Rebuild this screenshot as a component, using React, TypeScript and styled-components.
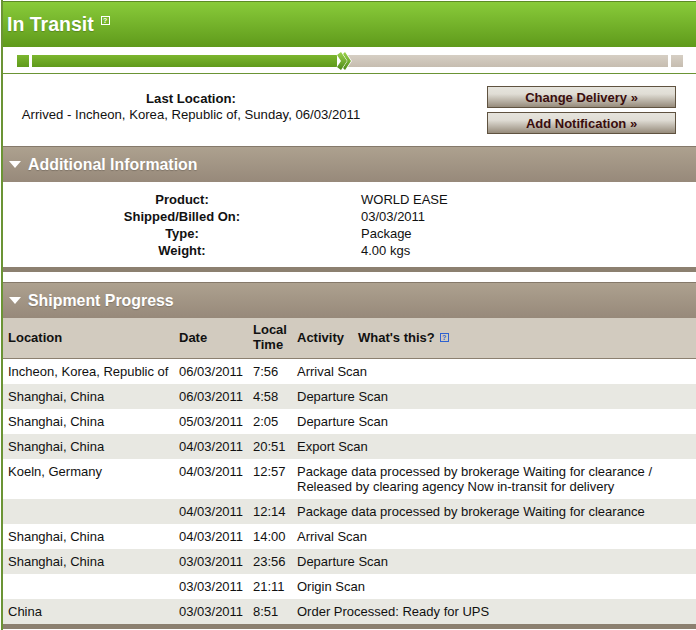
import React from "react";
import styled, { createGlobalStyle } from "styled-components";

const Global = createGlobalStyle`
  html, body { margin: 0; padding: 0; background: #fff; }
  body { font-family: "Liberation Sans", Arial, sans-serif; font-size: 13px; color: #111; }
`;

const Page = styled.div`
  width: 695px;
  height: 630px;
  margin-left: 1px;
  padding-top: 1px;
  box-sizing: border-box;
  overflow: hidden;
  border-left: 2px solid #6b9435;
`;

const StatusBar = styled.div`
  height: 45px;
  border-top: 1px solid #5d8a26;
  background: linear-gradient(#89cb3a, #5f9a1b);
  display: flex;
  align-items: flex-start;
  padding-left: 4px;
`;

const StatusTitle = styled.h1`
  margin: 10px 0 0;
  font-size: 19.5px;
  line-height: 24px;
  font-weight: bold;
  color: #fff;
  text-shadow: 0 1px 1px rgba(0, 0, 0, 0.2);
`;

const HelpBox = styled.span<{ $blue?: boolean }>`
  display: inline-flex;
  align-items: center;
  justify-content: center;
  width: 9px;
  height: 9px;
  box-sizing: border-box;
  border: 1px solid ${(p) => (p.$blue ? "#2f62d0" : "#fff")};
  color: ${(p) => (p.$blue ? "#2f62d0" : "#fff")};
  font-size: 7px;
  line-height: 7px;
  font-weight: bold;
`;

const TitleHelp = styled(HelpBox)`
  margin: 14px 0 0 7px;
`;

const ProgressRow = styled.div`
  height: 27px;
  box-sizing: border-box;
  padding: 8px 0 0 14px;
  border-bottom: 1px solid #6b9435;
  display: flex;
  align-items: flex-start;
`;

const Segment = styled.div<{ $w: number; $done?: boolean }>`
  width: ${(p) => p.$w}px;
  height: 12px;
  margin-right: 3px;
  background: ${(p) =>
    p.$done ? "linear-gradient(#7cb62f, #5f9a1b)" : "linear-gradient(#d6cfc4, #c6bdb0)"};
`;

const Chevron = styled.svg`
  position: relative;
  z-index: 1;
  width: 14px;
  height: 18px;
  margin: -3px -6px 0 -3px;
  flex: none;
  overflow: visible;
`;

const Summary = styled.div`
  height: 72px;
  display: flex;
`;

const LastLocation = styled.div`
  width: 376px;
  padding: 17px 0 0 0;
  text-align: center;
  font-size: 13.15px;
  line-height: 16px;
`;

const Strong = styled.div`
  font-weight: bold;
`;

const Actions = styled.div`
  margin: 12px 0 0 108px;
  display: flex;
  flex-direction: column;
  gap: 4px;
`;

const ActionButton = styled.button`
  width: 189px;
  height: 22px;
  padding: 0;
  border: 1px solid #5f5240;
  background: linear-gradient(#e6e4dd, #e0ddd5 35%, #968b7b);
  color: #3a0d0d;
  font-family: inherit;
  font-size: 13px;
  font-weight: bold;
  text-align: center;
`;

const SectionHeader = styled.div`
  height: 36px;
  box-sizing: border-box;
  border-top: 1px solid #85796a;
  background: linear-gradient(#ada18f, #97897a);
  display: flex;
  align-items: center;
  padding-left: 6px;
  gap: 7px;
  font-size: 15.9px;
  font-weight: bold;
  color: #fff;
  text-shadow: 0 1px 1px rgba(0, 0, 0, 0.2);
`;

const Triangle = styled.span`
  width: 0;
  height: 0;
  border-left: 6.5px solid transparent;
  border-right: 6.5px solid transparent;
  border-top: 7px solid #fff;
`;

const Details = styled.div`
  height: 85px;
  box-sizing: border-box;
  padding-top: 9px;
  display: grid;
  grid-template-columns: 358px 1fr;
  grid-auto-rows: 17px;
  font-size: 13px;
  line-height: 17px;
`;

const DetailLabel = styled.div`
  font-weight: bold;
  text-align: center;
  width: 358px;
`;

const DetailValue = styled.div``;

const Rule = styled.div`
  height: 5px;
  background: #8c8070;
`;

const Spacer = styled.div`
  height: 10px;
`;

const TableGrid = styled.div`
  display: grid;
  grid-template-columns: 171px 74px 44px 1fr;
  padding-left: 5px;
`;

const HeadRow = styled(TableGrid)`
  height: 41px;
  box-sizing: border-box;
  padding-bottom: 2px;
  background: #d2cbbf;
  border-bottom: 1px solid #8c8070;
  align-items: center;
  font-size: 13px;
  line-height: 15px;
  font-weight: bold;
`;

const WhatsThis = styled.span`
  margin-left: 14px;
  display: inline-flex;
  align-items: center;
  gap: 5px;
`;

const Row = styled(TableGrid)<{ $alt?: boolean }>`
  background: ${(p) => (p.$alt ? "#e8e8e2" : "#fff")};
  padding-top: 5px;
  padding-bottom: 5px;
  font-size: 13px;
  line-height: 15px;
`;

const details = [
  ["Product:", "WORLD EASE"],
  ["Shipped/Billed On:", "03/03/2011"],
  ["Type:", "Package"],
  ["Weight:", "4.00 kgs"],
];

const rows = [
  ["Incheon, Korea, Republic of", "06/03/2011", "7:56", "Arrival Scan"],
  ["Shanghai, China", "06/03/2011", "4:58", "Departure Scan"],
  ["Shanghai, China", "05/03/2011", "2:05", "Departure Scan"],
  ["Shanghai, China", "04/03/2011", "20:51", "Export Scan"],
  ["Koeln, Germany", "04/03/2011", "12:57", "Package data processed by brokerage Waiting for clearance / Released by clearing agency Now in-transit for delivery"],
  ["", "04/03/2011", "12:14", "Package data processed by brokerage Waiting for clearance"],
  ["Shanghai, China", "04/03/2011", "14:00", "Arrival Scan"],
  ["Shanghai, China", "03/03/2011", "23:56", "Departure Scan"],
  ["", "03/03/2011", "21:11", "Origin Scan"],
  ["China", "03/03/2011", "8:51", "Order Processed: Ready for UPS"],
];

export default function App() {
  return (
    <Page>
      <Global />
      <StatusBar>
        <StatusTitle>In Transit</StatusTitle>
        <TitleHelp>?</TitleHelp>
      </StatusBar>
      <ProgressRow>
        <Segment $w={12} $done />
        <Segment $w={305} $done />
        <Chevron viewBox="0 0 14 18">
          <defs>
            <linearGradient id="chev" x1="0" y1="0" x2="0" y2="1">
              <stop offset="0" stopColor="#9bd24a" />
              <stop offset="1" stopColor="#4f8a1a" />
            </linearGradient>
          </defs>
          <path d="M6 2 L8 0 L14 9 L8 18 L6 16 L10 9 Z" fill="url(#chev)" stroke="#fff" strokeWidth="1.5" paintOrder="stroke" />
          <path d="M0 3 L4 0 L10 9 L4 18 L0 15 L4 9 Z" fill="url(#chev)" stroke="#fff" strokeWidth="1" paintOrder="stroke" />
        </Chevron>
        <Segment $w={323} />
        <Segment $w={12} />
      </ProgressRow>
      <Summary>
        <LastLocation>
          <Strong>Last Location:</Strong>
          Arrived - Incheon, Korea, Republic of, Sunday, 06/03/2011
        </LastLocation>
        <Actions>
          <ActionButton>Change Delivery »</ActionButton>
          <ActionButton>Add Notification »</ActionButton>
        </Actions>
      </Summary>
      <SectionHeader>
        <Triangle />
        Additional Information
      </SectionHeader>
      <Details>
        {details.map(([label, value]) => (
          <React.Fragment key={label}>
            <DetailLabel>{label}</DetailLabel>
            <DetailValue>{value}</DetailValue>
          </React.Fragment>
        ))}
      </Details>
      <Rule />
      <Spacer />
      <SectionHeader>
        <Triangle />
        Shipment Progress
      </SectionHeader>
      <HeadRow>
        <div>Location</div>
        <div>Date</div>
        <div>
          Local
          <br />
          Time
        </div>
        <div>
          Activity
          <WhatsThis>
            What's this? <HelpBox $blue>?</HelpBox>
          </WhatsThis>
        </div>
      </HeadRow>
      {rows.map((r, i) => (
        <Row key={i} $alt={i % 2 === 1}>
          <div>{r[0]}</div>
          <div>{r[1]}</div>
          <div>{r[2]}</div>
          <div>{r[3]}</div>
        </Row>
      ))}
      <Rule />
    </Page>
  );
}
